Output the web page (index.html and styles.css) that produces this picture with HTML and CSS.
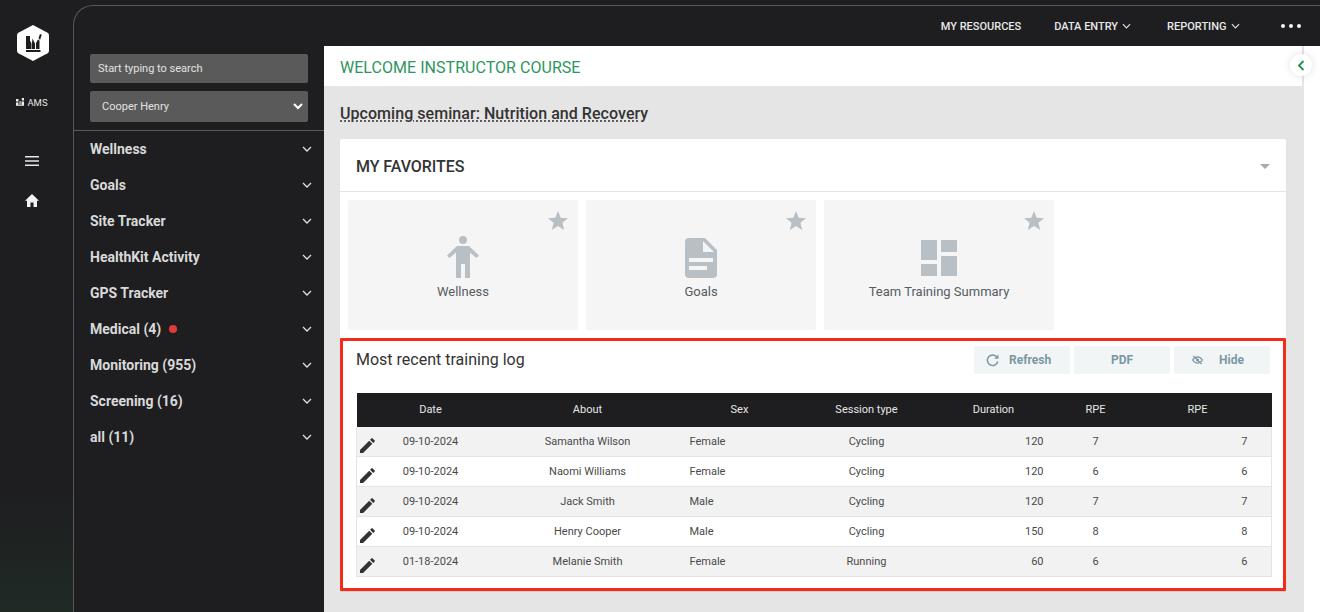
FILE: index.html
```html
<!DOCTYPE html>
<html>
<head>
<title>AMS</title>
<meta name="viewport" content="width=device-width, initial-scale=1">
<link rel="stylesheet" href="styles.css">
</head>
<body>
<div class="rail">
  <svg class="logo" width="32" height="36" viewBox="0 0 32 36">
    <path d="M16 0 30.600 7.800Q32 8.600 32 10.200V25.800Q32 27.400 30.600 28.200L16 36 1.400 28.200Q0 27.400 0 25.800V10.200Q0 8.600 1.400 7.800Z" fill="#fff"/>
    <path d="M9 11h4v4.500l1.500 3V24H9zM15.500 13.500l2.500 5V24h-3V18zM19 18l2-3.500 1.500 1V24H19zM21.500 13l1.500-4 1.800.8L23 15zM9 25h14.500v2H9z" fill="#1e1e20"/>
  </svg>
  <div class="brand">
    <svg width="8" height="8" viewBox="0 0 8 8"><path d="M0 1h2.500v2.500H0zM0 4.500h2.500V7H0zM3.500 3H4.600V7H3.500zM5.500 3.500H8V7H5.500zM5.800 0H8V2.600H5.800zM0 7.300h8V8H0z" fill="#eee"/></svg>
    <span>AMS</span>
  </div>
  <svg class="menu" width="14" height="10" viewBox="0 0 14 10"><path d="M0 0h14v1.500H0zM0 4.200h14v1.500H0zM0 8.500h14V10H0z" fill="#e8e8e8"/></svg>
  <svg class="home" width="14" height="13" viewBox="0 0 14 13"><path d="M7 0 14 6.800H12V13H8.500V8.500h-3V13H2V6.800H0z" fill="#f2f2f2"/></svg>
</div>
<div class="frame">
  <div class="topbar">
    <a>MY RESOURCES</a>
    <a>DATA ENTRY<svg class="chev" width="9" height="6" viewBox="0 0 10 6"><path d="M1 1l4 4 4-4"/></svg></a>
    <a>REPORTING<svg class="chev" width="9" height="6" viewBox="0 0 10 6"><path d="M1 1l4 4 4-4"/></svg></a>
    <span class="dots"><i></i><i></i><i></i></span>
  </div>
  <div class="below">
    <div class="side">
      <div class="filters">
        <div class="search">Start typing to search</div>
        <div class="pick">Cooper Henry
          <svg width="10" height="7" viewBox="0 0 10 7"><path d="M1 1l4 4 4-4" fill="none" stroke="#fff" stroke-width="2"/></svg>
        </div>
      </div>
      <ul class="nav">
        <li>Wellness<svg class="chev" width="10" height="6" viewBox="0 0 10 6"><path d="M1 1l4 4 4-4"/></svg></li>
        <li>Goals<svg class="chev" width="10" height="6" viewBox="0 0 10 6"><path d="M1 1l4 4 4-4"/></svg></li>
        <li>Site Tracker<svg class="chev" width="10" height="6" viewBox="0 0 10 6"><path d="M1 1l4 4 4-4"/></svg></li>
        <li>HealthKit Activity<svg class="chev" width="10" height="6" viewBox="0 0 10 6"><path d="M1 1l4 4 4-4"/></svg></li>
        <li>GPS Tracker<svg class="chev" width="10" height="6" viewBox="0 0 10 6"><path d="M1 1l4 4 4-4"/></svg></li>
        <li>Medical (4)<b class="dot"></b><svg class="chev" width="10" height="6" viewBox="0 0 10 6"><path d="M1 1l4 4 4-4"/></svg></li>
        <li>Monitoring (955)<svg class="chev" width="10" height="6" viewBox="0 0 10 6"><path d="M1 1l4 4 4-4"/></svg></li>
        <li>Screening (16)<svg class="chev" width="10" height="6" viewBox="0 0 10 6"><path d="M1 1l4 4 4-4"/></svg></li>
        <li>all (11)<svg class="chev" width="10" height="6" viewBox="0 0 10 6"><path d="M1 1l4 4 4-4"/></svg></li>
      </ul>
    </div>
    <div class="main">
      <div class="welcome">WELCOME INSTRUCTOR COURSE</div>
      <div class="content">
        <div class="seminar"><span>Upcoming seminar: Nutrition and Recovery</span></div>
        <div class="card">
          <div class="card-head">
            <h3>MY FAVORITES</h3>
            <span class="caret"></span>
          </div>
          <div class="tiles">
            <div class="tile">
              <svg class="star" width="20" height="19" viewBox="0 0 20 19"><path d="M10 0l2.700 6.700 7.300.5-5.600 4.600 1.800 7.100L10 15l-6.200 3.900 1.800-7.100L0 7.200l7.300-.5z"/></svg>
              <svg class="big" width="32" height="42" viewBox="0 0 32 42"><circle cx="16" cy="4" r="4"/><path d="M10 10h12l10 9.500-2.500 2.500L23 16.500V42h-5V28h-4v14H9V16.500L2.500 22 0 19.500z"/></svg>
              <span>Wellness</span>
            </div>
            <div class="tile">
              <svg class="star" width="20" height="19" viewBox="0 0 20 19"><path d="M10 0l2.700 6.700 7.300.5-5.600 4.600 1.800 7.100L10 15l-6.200 3.900 1.800-7.100L0 7.200l7.300-.5z"/></svg>
              <svg class="big" width="32" height="40" viewBox="0 0 32 40"><path fill-rule="evenodd" d="M4 0h16l12 12v24q0 4-4 4H4q-4 0-4-4V4q0-4 4-4zM18 3v11h11zM4 20v4h24v-4zM4 28v4h18v-4z"/></svg>
              <span>Goals</span>
            </div>
            <div class="tile">
              <svg class="star" width="20" height="19" viewBox="0 0 20 19"><path d="M10 0l2.700 6.700 7.300.5-5.600 4.600 1.800 7.100L10 15l-6.200 3.900 1.800-7.100L0 7.200l7.300-.5z"/></svg>
              <svg class="big grid" width="36" height="36" viewBox="0 0 36 36"><path d="M0 0h16v20H0zM20 0h16v12H20zM20 16h16v20H20zM0 24h16v12H0z"/></svg>
              <span>Team Training Summary</span>
            </div>
          </div>
          <div class="log">
            <div class="log-head">
              <h4>Most recent training log</h4>
              <div class="btns">
                <a class="btn btn-refresh"><svg width="13" height="13" viewBox="0 0 13 13"><path d="M11 3.200A5.300 5.300 0 1 0 11.800 7.500" fill="none" stroke="#7b97a3" stroke-width="1.500"/><path d="M12.500 .5v4.200H8.300z" fill="#7b97a3"/></svg><span>Refresh</span></a>
                <a class="btn btn-pdf"><span>PDF</span></a>
                <a class="btn btn-hide"><svg width="11" height="10" viewBox="0 0 12 10"><path d="M.7 5Q3 1.500 6 1.500T11.300 5Q9 8.500 6 8.500T.7 5Z" fill="none" stroke="#7b97a3" stroke-width="1.400"/><circle cx="6" cy="5" r="1.700" fill="#7b97a3"/><path d="M1.500.5l9 9" stroke="#7b97a3" stroke-width="1.400"/></svg><span>Hide</span></a>
              </div>
            </div>
            <table>
              <colgroup>
                <col class="c-edit"><col class="c-date"><col class="c-about"><col class="c-sex"><col class="c-type"><col class="c-dur"><col class="c-rpe"><col class="c-rpe2"><col class="c-gut">
              </colgroup>
              <thead>
                <tr><th></th><th>Date</th><th>About</th><th>Sex</th><th>Session type</th><th>Duration</th><th>RPE</th><th>RPE</th><th></th></tr>
              </thead>
              <tbody>
                <tr><td class="edit"><svg width="15" height="15" viewBox="0 0 15 15"><path d="M0 15V11.900L9.200 2.700 12.300 5.800 3.100 15zM10.100 1.800 11.600.300Q12 -.1 12.400.300L14.700 2.600Q15.100 3 14.700 3.400L13.200 4.900z"/></svg></td><td class="mid">09-10-2024</td><td class="mid">Samantha Wilson</td><td>Female</td><td class="mid">Cycling</td><td class="num">120</td><td class="mid">7</td><td class="num">7</td><td></td></tr>
                <tr><td class="edit"><svg width="15" height="15" viewBox="0 0 15 15"><path d="M0 15V11.900L9.200 2.700 12.300 5.800 3.100 15zM10.100 1.800 11.600.300Q12 -.1 12.400.300L14.700 2.600Q15.100 3 14.700 3.400L13.200 4.900z"/></svg></td><td class="mid">09-10-2024</td><td class="mid">Naomi Williams</td><td>Female</td><td class="mid">Cycling</td><td class="num">120</td><td class="mid">6</td><td class="num">6</td><td></td></tr>
                <tr><td class="edit"><svg width="15" height="15" viewBox="0 0 15 15"><path d="M0 15V11.900L9.200 2.700 12.300 5.800 3.100 15zM10.100 1.800 11.600.300Q12 -.1 12.400.300L14.700 2.600Q15.100 3 14.700 3.400L13.200 4.900z"/></svg></td><td class="mid">09-10-2024</td><td class="mid">Jack Smith</td><td>Male</td><td class="mid">Cycling</td><td class="num">120</td><td class="mid">7</td><td class="num">7</td><td></td></tr>
                <tr><td class="edit"><svg width="15" height="15" viewBox="0 0 15 15"><path d="M0 15V11.900L9.200 2.700 12.300 5.800 3.100 15zM10.100 1.800 11.600.300Q12 -.1 12.400.300L14.700 2.600Q15.100 3 14.700 3.400L13.200 4.900z"/></svg></td><td class="mid">09-10-2024</td><td class="mid">Henry Cooper</td><td>Male</td><td class="mid">Cycling</td><td class="num">150</td><td class="mid">8</td><td class="num">8</td><td></td></tr>
                <tr><td class="edit"><svg width="15" height="15" viewBox="0 0 15 15"><path d="M0 15V11.900L9.200 2.700 12.300 5.800 3.100 15zM10.100 1.800 11.600.300Q12 -.1 12.400.300L14.700 2.600Q15.100 3 14.700 3.400L13.200 4.900z"/></svg></td><td class="mid">01-18-2024</td><td class="mid">Melanie Smith</td><td>Female</td><td class="mid">Running</td><td class="num">60</td><td class="mid">6</td><td class="num">6</td><td></td></tr>
              </tbody>
            </table>
          </div>
        </div>
      </div>
    </div>
    <div class="strip"></div>
  </div>
  <div class="collapse"><svg width="8" height="11" viewBox="0 0 8 11"><path d="M6.500 1 2 5.500 6.500 10" fill="none" stroke="#1f8f4f" stroke-width="1.800"/></svg></div>
</div>
</body>
</html>
```

FILE: styles.css
```css
html,body{height:100%}
body{margin:0;display:flex;height:612px;overflow:hidden;background:#1e1e20;font-family:Roboto,"Liberation Sans",sans-serif;color:#444}
h3,h4{margin:0}

.rail{width:73px;flex:none;display:flex;flex-direction:column;align-items:center;padding-right:9px;box-sizing:border-box;background:linear-gradient(#1e1e20 80%,#1f2a25)}
.logo{margin-top:25px;margin-left:2px}
.brand{margin-top:34px;display:flex;align-items:center;gap:3px;font-size:9.500px;color:#e4e4e4;height:14px}
.menu{margin-top:47px;margin-left:-1px}
.home{margin-top:28px;margin-left:-1px}

.frame{position:relative;flex:1;margin-top:5px;border-left:1px solid #58585a;border-top:1px solid #58585a;border-top-left-radius:20px;display:flex;flex-direction:column;min-width:0}
.topbar{height:40px;flex:none;display:flex;align-items:center;justify-content:flex-end;color:#e8e8e8;font-size:11px;font-weight:500}
.topbar a{margin-left:33px;white-space:nowrap;display:flex;align-items:center}
.topbar a:last-of-type{margin-left:36px}
.topbar .chev{margin-left:4px}
.chev path{fill:none;stroke:#e0e0e0;stroke-width:1.300}
.dots{display:flex;gap:3.500px;margin-left:41px;margin-right:19px}
.dots i{width:4.500px;height:4.500px;border-radius:50%;background:#f4f4f4}

.below{flex:1;display:flex;min-height:0}
.side{width:250px;flex:none}
.filters{padding:8px 16px 8px;border-bottom:1px solid #58585a;height:68px}
.search,.pick{background:#5a5a5a;border-radius:2px;width:218px;color:#e2e2e2;font-size:11px;display:flex;align-items:center;box-sizing:border-box}
.search{height:29px;padding-left:8px}
.pick{height:31px;margin-top:8px;padding:0 5px 0 12px;justify-content:space-between}
.nav{list-style:none;margin:0;padding:0 12px 0 16px}
.nav li{height:36px;display:flex;align-items:center;font-size:14px;font-weight:700;color:#d9d9d9}
.nav .chev{margin-left:auto}
.dot{width:8px;height:8px;border-radius:50%;background:#e23a3a;margin-left:8px}

.main{flex:1;background:#e5e5e5;min-width:0}
.welcome{height:40px;background:#fff;margin-right:2px;padding:2px 0 0 16px;box-sizing:border-box;display:flex;align-items:center;font-size:16px;color:#2c9660;letter-spacing:.04px}
.content{padding:0 18px 0 16px}
.seminar{height:53px;display:flex;align-items:center;font-size:16px;font-weight:500;color:#333;letter-spacing:.05px;padding-top:2px;box-sizing:border-box}
.seminar span{text-decoration:underline dotted;text-underline-offset:2px}
.strip{width:16px;flex:none;background:#fff}

.card{background:#fff;border-radius:2px;height:452px;box-shadow:0 1px 1px rgba(0,0,0,.1)}
.card-head{border-bottom:1px solid #e3e3e3;display:flex;align-items:center;justify-content:space-between;padding:2px 16px 0;height:50px}
.card-head h3{font-size:16px;font-weight:500;color:#333;letter-spacing:-.05px}
.caret{border:5px solid transparent;border-top:5px solid #a5adb3;border-bottom:0}

.tiles{display:flex;gap:8px;padding:8px}
.tile{position:relative;width:230px;height:130px;background:#f5f5f5;border-radius:2px;display:flex;flex-direction:column;align-items:center;font-size:13px;color:#555b63}
.tile .big{fill:#b8bfc5;position:absolute;left:50%;transform:translateX(-50%);bottom:52px}
.tile .big.grid{bottom:54px}
.tile span{margin-top:85px;line-height:14px}
.star{position:absolute;top:11px;right:10px;fill:#b8bfc5}

.log{height:253px;box-sizing:border-box;border:3px solid #f32c1a;border-radius:1px;padding:5px 13px 0}
.log-head{display:flex;justify-content:space-between;height:47px}
.log-head h4{font-size:16px;font-weight:400;color:#333;line-height:22px;padding-top:3px}
.btns{display:flex;gap:4px}
.btn{width:96px;height:28px;box-sizing:border-box;background:#f2f5f6;border-radius:2px;color:#7b97a3;font-size:12px;font-weight:700;display:flex;align-items:center}
.btn-refresh{padding-left:12px;gap:10px}
.btn-pdf{justify-content:center}
.btn-hide{padding-left:18px;gap:16px}

table{border-collapse:collapse;table-layout:fixed;width:915px;font-size:11px}
.c-edit{width:11px}.c-date{width:126px}.c-about{width:188px}.c-sex{width:116px}.c-type{width:138px}.c-dur{width:116px}.c-rpe{width:88px}.c-rpe2{width:116px}.c-gut{width:16px}
th{background:#1e1e20;color:#e6e6e6;font-weight:400;height:34px;padding:0 0 1px;box-sizing:border-box;text-align:center}
td{height:29px;padding:0 8px;border-bottom:1px solid #e4e4e4;color:#4a4a4a;white-space:nowrap}
tbody tr:nth-child(odd) td{background:#f2f2f2}
td:first-child{border-left:1px solid #e4e4e4}
td:last-child{border-right:1px solid #e4e4e4}
td.mid{text-align:center;padding:0}
td.num{text-align:right}
td.edit{padding:0;overflow:visible}
.edit svg{display:block;margin:8px 0 0 3px;fill:#333}

.collapse{position:absolute;left:1216px;top:48px;width:22px;height:22px;border-radius:50%;background:#fff;box-shadow:0 0 8px rgba(0,0,0,.12);display:flex;align-items:center;justify-content:center}
```
